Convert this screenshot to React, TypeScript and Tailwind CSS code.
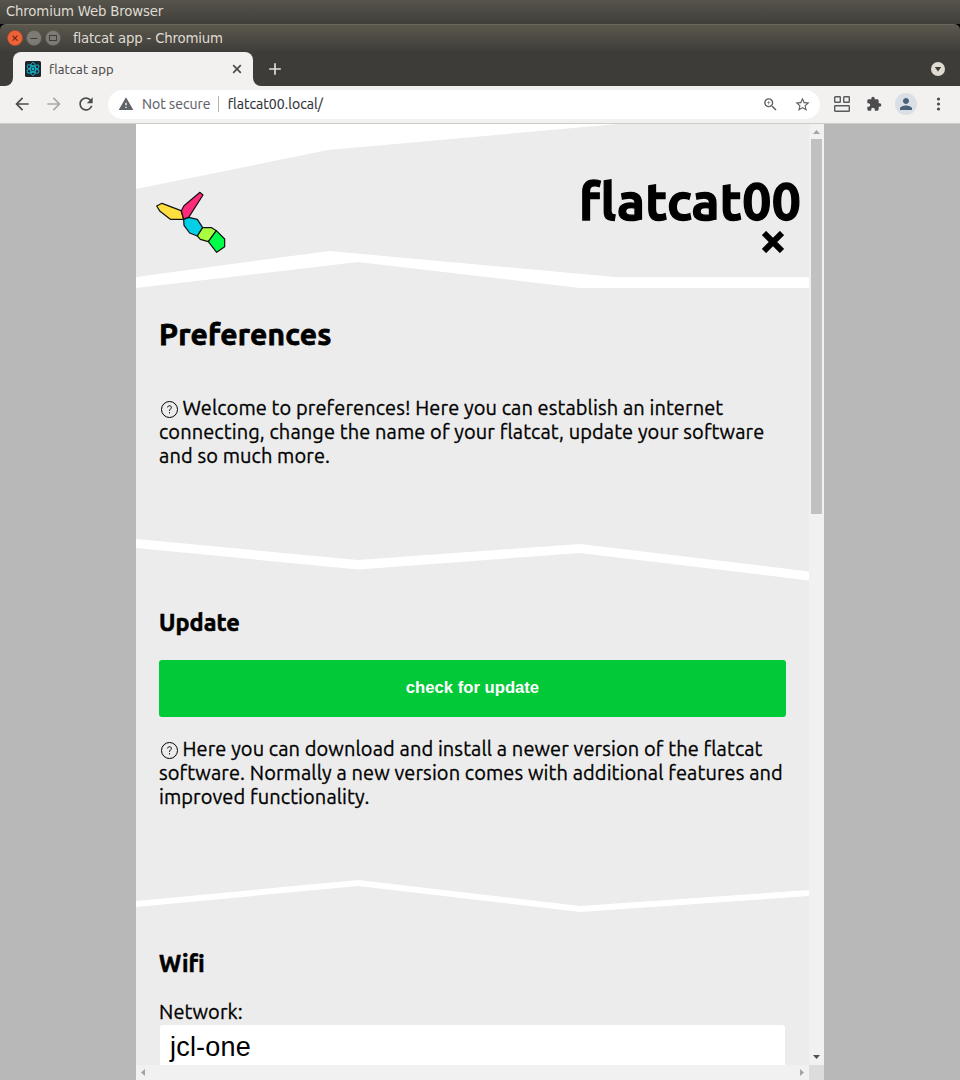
import type { ReactNode } from "react";
import {
  MdArrowBack,
  MdArrowForward,
  MdRefresh,
  MdWarning,
  MdZoomIn,
  MdStarBorder,
  MdExtension,
  MdPerson,
  MdAdd,
} from "react-icons/md";

function SystemBar() {
  return (
    <div className="flex h-6 shrink-0 items-center bg-linear-to-b from-[#56544b] to-[#403f3a] pb-[1px] pl-[6px] font-['DejaVu_Sans',sans-serif] text-[13.33px] tracking-[-0.19px] text-[#dfdbd2]">
      Chromium Web Browser
    </div>
  );
}

function TitleBar() {
  return (
    <div className="shrink-0 bg-black">
      <div className="flex h-7 items-center rounded-t-[6px] border-t border-[#69675d] bg-linear-to-b from-[#5a574d] to-[#3f3d39] pl-[7px]">
        <div className="mb-px flex gap-[3px]">
          <svg className="size-4" viewBox="0 0 16 16">
            <circle cx="8" cy="8" r="7.5" fill="#ee6237" stroke="#b84a26" strokeWidth="0.6" />
            <path d="M5.5 5.7l5 5M10.5 5.7l-5 5" stroke="#6b2614" strokeWidth="1.1" />
          </svg>
          <svg className="size-4" viewBox="0 0 16 16">
            <circle cx="8" cy="8" r="7.5" fill="#7d7b73" stroke="#5e5c55" strokeWidth="0.6" />
            <path d="M4.5 8.5h7" stroke="#3e3d39" strokeWidth="1" />
          </svg>
          <svg className="size-4" viewBox="0 0 16 16">
            <circle cx="8" cy="8" r="7.5" fill="#7d7b73" stroke="#5e5c55" strokeWidth="0.6" />
            <rect x="4.5" y="5.5" width="7" height="5" fill="none" stroke="#3e3d39" strokeWidth="1" />
          </svg>
        </div>
        <span className="ml-[12px] font-['DejaVu_Sans',sans-serif] text-[13.33px] tracking-[-0.21px] text-[#dfdbd2]">
          flatcat app - Chromium
        </span>
      </div>
    </div>
  );
}

function ReactMark() {
  return (
    <svg className="size-4" viewBox="0 0 16 16">
      <rect width="16" height="16" rx="1.5" fill="#20232a" />
      <g fill="none" stroke="#12b5cb" strokeWidth="0.9">
        <ellipse cx="8" cy="8" rx="6.6" ry="2.6" transform="rotate(30 8 8)" />
        <ellipse cx="8" cy="8" rx="6.6" ry="2.6" transform="rotate(90 8 8)" />
        <ellipse cx="8" cy="8" rx="6.6" ry="2.6" transform="rotate(150 8 8)" />
      </g>
      <circle cx="8" cy="8" r="1.4" fill="#12b5cb" />
    </svg>
  );
}

function TabStrip() {
  return (
    <div className="flex h-[34px] shrink-0 items-stretch bg-[#3e3c38] pr-[15px] pl-[5px]">
      <svg className="h-2 w-2 self-end" viewBox="0 0 8 8">
        <path d="M8 0v8H0a8 8 0 0 0 8-8z" fill="#f2f1f0" />
      </svg>
      <div className="flex w-60 items-center rounded-t-lg bg-[#f2f1f0] pr-[9px] pl-3">
        <ReactMark />
        <span className="ml-2 flex-1 pt-px text-[13px] tracking-[0.18px] text-[#4c4c4c] [-webkit-text-stroke:0.15px]">
          flatcat app
        </span>
        <svg className="size-[14px]" viewBox="0 0 14 14">
          <path d="M3.2 3.2l7.6 7.6M10.8 3.2l-7.6 7.6" stroke="#4c4c4c" strokeWidth="1.7" />
        </svg>
      </div>
      <svg className="h-2 w-2 self-end" viewBox="0 0 8 8">
        <path d="M0 0v8h8a8 8 0 0 1-8-8z" fill="#f2f1f0" />
      </svg>
      <MdAdd className="ml-[4px] size-5 self-center text-[#e3dfd8]" />
      <svg className="ml-auto size-[14px] self-center" viewBox="0 0 14 14">
        <circle cx="7" cy="7" r="7" fill="#dfdbd2" />
        <path d="M3.8 5h6.4L7 9.4z" fill="#3c3b37" />
      </svg>
    </div>
  );
}

function Toolbar() {
  return (
    <div className="flex h-[38px] shrink-0 items-center border-b border-[#cfcdca] bg-[#f2f1f0] pr-[12px] pl-[12px] text-[#4c4c4c]">
      <MdArrowBack className="-mt-px size-5" />
      <MdArrowForward className="-mt-px ml-3 size-5 text-[#a9a8a6]" />
      <MdRefresh className="-mt-px ml-3 size-5" />
      <div className="-mt-px ml-3 flex h-[29px] w-[712px] items-center rounded-full bg-white pr-[9px] pl-[10px] text-[14px] [-webkit-text-stroke:0.15px]">
        <MdWarning className="size-4 text-[#5f6368]" strokeWidth="0" />
        <span className="ml-2 tracking-[0.04px] text-[#5f6368]">Not secure</span>
        <span className="ml-[7px] h-4 w-px bg-[#b5b5b5]" />
        <span className="ml-[9px] flex-1 tracking-[0.05px] text-[#303134]">flatcat00.local/</span>
        <MdZoomIn className="size-[17px] text-[#5f6368]" />
        <MdStarBorder className="ml-[15px] size-[17px] text-[#5f6368]" />
      </div>
      <svg className="-mt-px ml-[14px] size-4 shrink-0 fill-none stroke-[#5a5a5a]" viewBox="0 0 16 16" strokeWidth="1.4">
        <rect x="0.7" y="0.7" width="5.6" height="5.6" rx="0.6" />
        <rect x="9.7" y="0.7" width="5.6" height="5.6" rx="0.6" />
        <rect x="0.7" y="9.7" width="14.6" height="5.6" rx="0.6" />
      </svg>
      <MdExtension className="-mt-px ml-4 size-4 shrink-0" />
      <div className="-mt-px ml-[13px] flex size-[22px] shrink-0 items-center justify-center rounded-full bg-[#dadfe5]">
        <MdPerson className="size-[18px] text-[#4a6178]" />
      </div>
      <svg className="-mt-px ml-[13px] size-[18px] shrink-0 fill-[#4c4c4c]" viewBox="0 0 18 18">
        <circle cx="8.5" cy="4" r="1.6" />
        <circle cx="8.5" cy="9" r="1.6" />
        <circle cx="8.5" cy="14" r="1.6" />
      </svg>
    </div>
  );
}

function Waves() {
  return (
    <svg className="absolute inset-0 h-[941px] w-[673px] fill-white" viewBox="136 124 673 941">
      <path d="M136 124H618L328 150L136 189z" />
      <path d="M136 277L329 251L615 277H809V288H580L358 262L136 288z" />
      <path d="M136 539L358 560L580 544L809 571.5V580.5L580 553L358 569.5L136 548z" />
      <path d="M136 901L358 880L580 906L809 890V896L580 912L358 886L136 907z" />
    </svg>
  );
}

function FlatcatLogo() {
  return (
    <svg className="h-[64px] w-[72px]" viewBox="57 213 216 192" stroke="#111" strokeWidth="3.6" strokeLinejoin="round">
      <path d="M62 258L78 250L135 272L143 298H103L72 274z" fill="#ffdf40" />
      <path d="M136 272L144 257L192 217L201 225L158 292L143 298z" fill="#ff2a7a" />
      <path d="M143 298L158 292L184 298L200 323L184 348L161 339L144 316z" fill="#00cfe6" />
      <path d="M200 323H227L241 332L217 365L193 358L184 348z" fill="#a8ff40" />
      <path d="M241 332L266 357V380L242 397L217 365z" fill="#00ff48" />
    </svg>
  );
}

function Help({ children }: { children: ReactNode }) {
  return (
    <p className="text-[20px] leading-6 tracking-[0.1px] [-webkit-text-stroke:0.3px]">
      <svg className="mr-[3.5px] ml-[1px] inline size-[19px] align-[-4px]" viewBox="0 0 19 19">
        <circle cx="9.5" cy="9.5" r="8" fill="none" stroke="#000" strokeWidth="1" />
        <path d="M7.6 7.4C7.7 5.2 11.4 5.2 11.4 7.4C11.4 8.9 9.5 9 9.5 10.9M9.5 12.2v1.2" fill="none" stroke="#000" strokeWidth="1" />
      </svg>
      {children}
    </p>
  );
}

function Content() {
  return (
    <div className="relative h-[941px] w-[673px] overflow-hidden bg-[#ececec] text-black">
      <Waves />
      <div className="relative flex flex-col">
        <header className="flex h-[164px] justify-between pt-[67px] pr-[8px] pl-[19px]">
          <FlatcatLogo />
          <div className="flex flex-col items-end">
            <h1 className="-mt-[20px] text-[51.5px] leading-[60px] font-bold tracking-[0.3px] [-webkit-text-stroke:1.3px]">
              flatcat00
            </h1>
            <svg className="mr-[17.5px] size-[22px]" viewBox="0 0 22 22">
              <path d="M2 2L20 20M20 2L2 20" stroke="#000" strokeWidth="6" />
            </svg>
          </div>
        </header>
        <section className="flex h-[284px] flex-col pt-[28px] pr-[23px] pl-[23px]">
          <h2 className="text-[30px] leading-9 font-bold tracking-[0.2px] [-webkit-text-stroke:0.8px]">Preferences</h2>
          <div className="mt-[44px]">
            <Help>
              Welcome to preferences! Here you can establish an internet connecting, change the name of your
              flatcat, update your software and so much more.
            </Help>
          </div>
        </section>
        <section className="flex h-[340px] flex-col pt-[36px] pr-[23px] pl-[23px]">
          <h3 className="text-[23.5px] leading-7 font-bold [-webkit-text-stroke:0.6px]">Update</h3>
          <button className="mt-[24px] h-[57px] w-full rounded-[3px] bg-[#02c937] pb-[2px] font-['Liberation_Sans',sans-serif] text-[16.67px] font-bold text-white">
            check for update
          </button>
          <div className="mt-[20px]">
            <Help>
              Here you can download and install a newer version of the flatcat software. Normally a new version
              comes with additional features and improved functionality.
            </Help>
          </div>
        </section>
        <section className="flex flex-col pt-[37px] pr-[23px] pl-[23px]">
          <h3 className="text-[23.5px] leading-7 font-bold [-webkit-text-stroke:0.6px]">Wifi</h3>
          <label className="mt-[23px] text-[20px] leading-6 tracking-[0.1px] [-webkit-text-stroke:0.3px]">Network:</label>
          <div className="mx-px mt-px h-[60px] rounded-[3px] bg-white px-[10px] pt-[6px] font-['Liberation_Sans',sans-serif] text-[27px] leading-8 tracking-[0.2px]">
            jcl-one
          </div>
        </section>
      </div>
    </div>
  );
}

function ScrollbarY() {
  return (
    <div className="flex w-[15px] flex-col items-center bg-[#f1f1f1]">
      <svg className="h-[15px] w-[15px]" viewBox="0 0 15 15">
        <path d="M4 10L7.5 6L11 10z" fill="#a3a3a3" />
      </svg>
      <div className="h-[375px] w-[11px] bg-[#c1c1c1]" />
      <svg className="mt-auto h-[15px] w-[15px]" viewBox="0 0 15 15">
        <path d="M4 5L7.5 9L11 5z" fill="#505050" />
      </svg>
    </div>
  );
}

function ScrollbarX() {
  return (
    <div className="flex h-[15px]">
      <div className="flex flex-1 justify-between bg-[#f1f1f1]">
        <svg className="h-[15px] w-[15px]" viewBox="0 0 15 15">
          <path d="M9 4L5 7.5L9 11z" fill="#a3a3a3" />
        </svg>
        <svg className="h-[15px] w-[15px]" viewBox="0 0 15 15">
          <path d="M6 4L10 7.5L6 11z" fill="#a3a3a3" />
        </svg>
      </div>
      <div className="w-[15px] bg-[#dcdcdc]" />
    </div>
  );
}

export default function App() {
  return (
    <div className="flex h-[1080px] w-[960px] flex-col overflow-hidden bg-[#b8b8b8] font-[Ubuntu,'Noto_Sans',sans-serif]">
      <SystemBar />
      <TitleBar />
      <TabStrip />
      <Toolbar />
      <main className="mx-auto flex w-[688px] flex-1 flex-col">
        <div className="flex">
          <Content />
          <ScrollbarY />
        </div>
        <ScrollbarX />
      </main>
    </div>
  );
}
